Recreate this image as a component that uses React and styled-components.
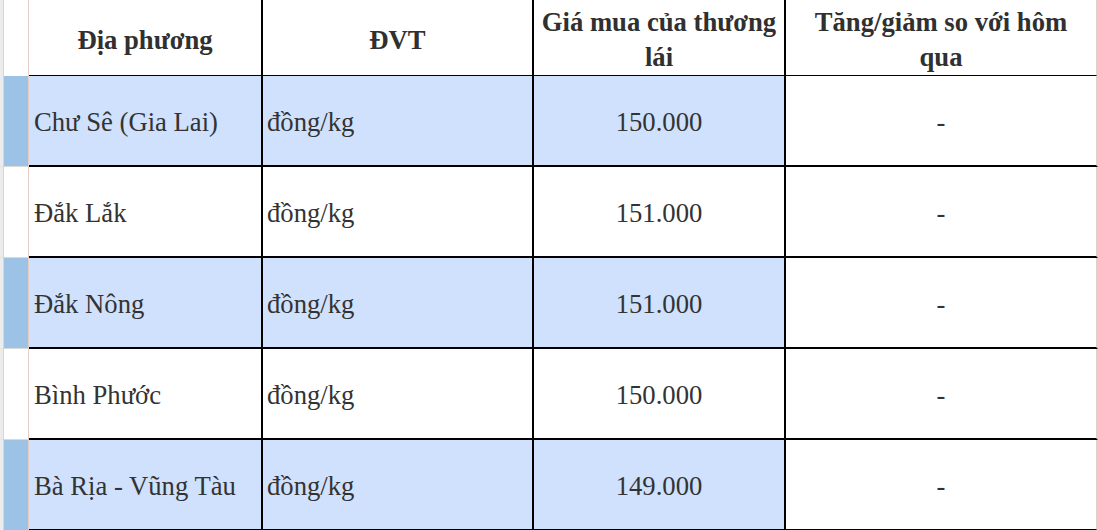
import React from "react";
import styled, { createGlobalStyle } from "styled-components";

const Global = createGlobalStyle`
  html, body { margin: 0; padding: 0; background: #fff; }
  body { font-family: "Liberation Serif", "Times New Roman", serif; color: #333; }
`;

const Sheet = styled.div`
  width: 1098px;
  height: 530px;
  overflow: hidden;
  display: flex;
  flex-direction: column;
`;

const Row = styled.div`
  display: grid;
  grid-template-columns: 29px 234px 271px 252px 312px;
  height: ${(p) => p.$h}px;
  flex: none;
`;

const Gutter = styled.div`
  box-sizing: border-box;
  border-left: 3px solid #ececec;
  box-shadow: inset 1px 0 0 #d6d6d6;
  border-right: 1px solid #e3cfc6;
  border-bottom: 1px solid #d9d9d9;
  background: ${(p) => (p.$blue ? "#9cc2e6" : "#fff")};
`;

const Cell = styled.div`
  box-sizing: border-box;
  display: flex;
  align-items: center;
  justify-content: ${(p) => (p.$center ? "center" : "flex-start")};
  text-align: ${(p) => (p.$center ? "center" : "left")};
  padding: 4px ${(p) => (p.$center ? 8 : 4)}px 0;
  padding-left: ${(p) => (p.$first ? 5 : p.$center ? 8 : 4)}px;
  border-right: 2px solid ${(p) => (p.$last ? "#e3cfc6" : "#000")};
  border-bottom: 2px solid #000;
  background: ${(p) => (p.$blue ? "#cfe1fc" : "#fff")};
  font-size: 26.67px;
  line-height: 35px;
  color: #333;
  white-space: ${(p) => (p.$wrap ? "normal" : "nowrap")};
`;

const HeadCell = styled(Cell)`
  font-weight: bold;
  color: #303030;
  padding: 5px 6px 0;
`;

const rows = [
  { place: "Chư Sê (Gia Lai)", price: "150.000", blue: true },
  { place: "Đắk Lắk", price: "151.000", blue: false },
  { place: "Đắk Nông", price: "151.000", blue: true },
  { place: "Bình Phước", price: "150.000", blue: false },
  { place: "Bà Rịa - Vũng Tàu", price: "149.000", blue: true },
];

export default function App() {
  return (
    <>
      <Global />
      <Sheet>
        <Row $h={76}>
          <Gutter />
          <HeadCell $center>Địa phương</HeadCell>
          <HeadCell $center>ĐVT</HeadCell>
          <HeadCell $center $wrap>Giá mua của thương lái</HeadCell>
          <HeadCell $center $wrap $last>Tăng/giảm so với hôm qua</HeadCell>
        </Row>
        {rows.map((r) => (
          <Row $h={91} key={r.place}>
            <Gutter $blue={r.blue} />
            <Cell $blue={r.blue} $first>{r.place}</Cell>
            <Cell $blue={r.blue}>đồng/kg</Cell>
            <Cell $blue={r.blue} $center>{r.price}</Cell>
            <Cell $center $last>-</Cell>
          </Row>
        ))}
      </Sheet>
    </>
  );
}
